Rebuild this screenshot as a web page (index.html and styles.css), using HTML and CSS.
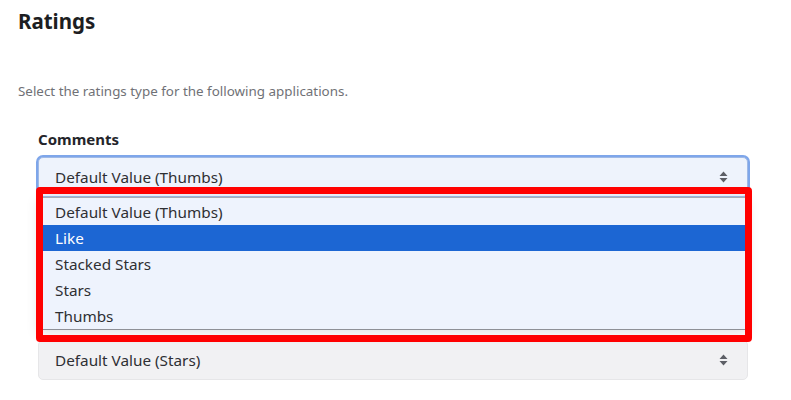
FILE: index.html
```html
<!DOCTYPE html>
<html>
<head>
<meta charset="utf-8">
<link rel="stylesheet" href="styles.css">
</head>
<body>
<h1 class="title">Ratings</h1>
<p class="desc">Select the ratings type for the following applications.</p>
<div class="field">
  <div class="label">Comments</div>
  <div class="select-wrap">
    <div class="select focused">
      <span>Default Value (Thumbs)</span>
      <svg class="arrows" width="9" height="12" viewBox="0 0 9 12"><path d="M4.5 0.5 L8.5 5 L0.5 5 Z M0.5 7 L8.5 7 L4.5 11.5 Z" fill="#5d5f66"/></svg>
    </div>
    <div class="dropdown">
      <div class="opt">Default Value (Thumbs)</div>
      <div class="opt active">Like</div>
      <div class="opt">Stacked Stars</div>
      <div class="opt">Stars</div>
      <div class="opt">Thumbs</div>
    </div>
    <div class="highlight"></div>
  </div>
</div>
<div class="field second">
  <div class="select plain">
    <span>Default Value (Stars)</span>
    <svg class="arrows" width="9" height="12" viewBox="0 0 9 12"><path d="M4.5 0.5 L8.5 5 L0.5 5 Z M0.5 7 L8.5 7 L4.5 11.5 Z" fill="#5d5f66"/></svg>
  </div>
</div>
</body>
</html>
```
FILE: styles.css
```css
html, body {
  margin: 0;
  padding: 0;
  background: #ffffff;
}
body {
  font-family: "Noto Sans", "DejaVu Sans", sans-serif;
  color: #2b2c30;
  padding: 0 18px;
}
.title {
  font-size: 20.5px;
  font-weight: 700;
  color: #1d1e22;
  margin: 0;
  padding-top: 7px;
  line-height: 28px;
}
.desc {
  margin: 0;
  margin-top: 47px;
  font-size: 13.4px;
  line-height: 19px;
  color: #707176;
}
.field {
  margin-left: 20px;
  width: 710px;
}
.label {
  font-size: 15px;
  font-weight: 700;
  color: #24252a;
  line-height: 20px;
  margin-top: 28px;
  margin-bottom: 8px;
}
.select-wrap {
  position: relative;
}
.select {
  box-sizing: border-box;
  height: 40px;
  display: flex;
  align-items: center;
  justify-content: space-between;
  padding: 0 19px 0 16px;
  font-size: 15.3px;
  border-radius: 5px;
  color: #2e2f33;
}
.select.focused {
  background: #eef3fc;
  border: 1px solid #9fb9e6;
  box-shadow: 0 0 0 2px #7ea6ea;
}
.select.plain {
  background: #f1f1f3;
  border: 1px solid #e6e6e8;
}
.arrows {
  display: block;
}
.dropdown {
  position: absolute;
  left: 0;
  top: 40px;
  width: 710px;
  background: #eef3fd;
  border-top: 1px solid #a9abb2;
  border-bottom: 1px solid #8e9097;
  padding-top: 1px;
  box-shadow: 0 3px 12px rgba(0, 0, 0, 0.12);
  z-index: 2;
}
.opt {
  height: 26px;
  line-height: 26px;
  padding-left: 17px;
  font-size: 15.3px;
  color: #2e2f33;
}
.opt.active {
  background: #1c66d3;
  color: #ffffff;
}
.highlight {
  position: absolute;
  left: -2px;
  top: 30px;
  width: 716px;
  height: 155px;
  box-sizing: border-box;
  border: 7px solid #ff0000;
  border-radius: 4px;
  z-index: 3;
}
.second {
  margin-top: 143px;
}
```
